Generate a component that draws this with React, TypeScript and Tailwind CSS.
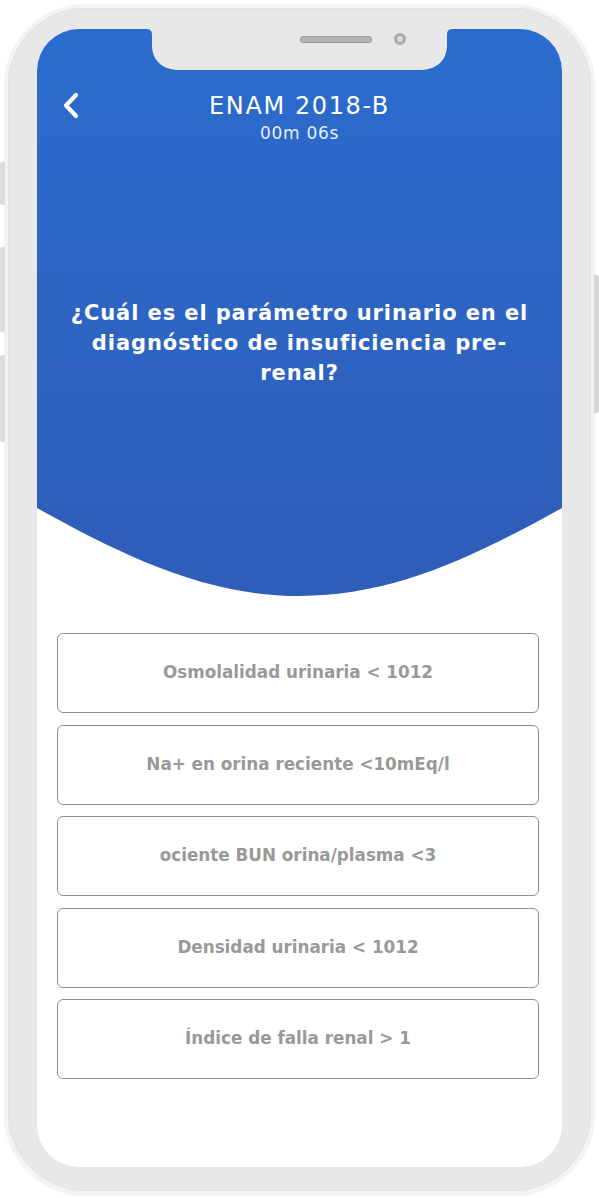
import React from "react";

const options = [
  "Osmolalidad urinaria < 1012",
  "Na+ en orina reciente <10mEq/l",
  "ociente BUN orina/plasma <3",
  "Densidad urinaria < 1012",
  "Índice de falla renal > 1",
];

function Notch() {
  return (
    <svg
      className="absolute left-[109px] top-0"
      width="307"
      height="42"
      viewBox="0 0 307 42"
    >
      <path
        d="M0 0 H307 C301 0 301 3 301 8 V16 C301 32 290 41 274 41 H33 C17 41 6 32 6 16 V8 C6 3 6 0 0 0 Z"
        fill="#e8e8e8"
      />
      <rect x="154" y="7" width="72" height="7" rx="3.5" fill="#9a9a9a" />
      <rect x="155" y="8" width="70" height="5" rx="2.5" fill="#b5b5b5" />
      <circle cx="254" cy="10" r="6.5" fill="#c4c4c4" />
      <circle cx="254" cy="10" r="5" fill="#9e9e9e" />
      <circle cx="254" cy="10" r="3.2" fill="#d9d9d9" />
    </svg>
  );
}

function SideButton({ h, right }: { h: string; right?: boolean }) {
  return (
    <div
      className={
        right
          ? "w-[5px] rounded-r-[2px] bg-[#d8d8d8] " + h
          : "w-[5px] rounded-l-[2px] bg-[#dcdcdc] " + h
      }
    />
  );
}

export default function App() {
  return (
    <div
      className="relative w-[599px] h-[1198px] bg-white overflow-hidden flex"
      style={{ fontFamily: '"DejaVu Sans", "Open Sans", sans-serif' }}
    >
      {/* left buttons */}
      <div className="absolute left-0 top-[162px] flex flex-col">
        <SideButton h="h-[43px]" />
        <div className="h-[42px]" />
        <SideButton h="h-[85px]" />
        <div className="h-[23px]" />
        <SideButton h="h-[87px]" />
      </div>
      <div className="absolute right-0 top-[275px]">
        <SideButton h="h-[138px]" right />
      </div>

      {/* phone body */}
      <div className="ml-[4px] mt-[4px] w-[591px] h-[1191px] rounded-[82px] bg-[#f3f3f3] p-[4px] shadow-[0_1px_2px_rgba(0,0,0,0.06)]">
        <div className="w-full h-full rounded-[78px] bg-[#e8e8e8] pt-[21px] pl-[29px] shadow-[inset_0_0_0_1px_#e2e2e2]">
          {/* screen */}
          <div className="relative w-[525px] h-[1138px] rounded-[42px] bg-white overflow-hidden">
            <div className="bg-gradient-to-b from-[#2a6cce] to-[#2f5fbb] h-[479px] flex flex-col items-center">
              <div className="w-full pt-[62px] grid grid-cols-[1fr_auto_1fr] items-start text-white">
                <div className="pl-[24px] pt-[1px]">
                  <svg width="20" height="28" viewBox="0 0 20 28" className="block">
                    <path
                      d="M15 3 L5 13.5 L15 24"
                      fill="none"
                      stroke="white"
                      strokeWidth="4.2"
                      strokeLinecap="round"
                      strokeLinejoin="round"
                    />
                  </svg>
                </div>
                <div className="flex flex-col items-center">
                  <div className="text-[24px] leading-[30px] font-normal tracking-[1.6px]">
                    ENAM 2018-B
                  </div>
                  <div className="text-[17px] leading-[20px] mt-[2px] tracking-[0.7px] text-[#e6eefb]">
                    00m 06s
                  </div>
                </div>
                <div />
              </div>
              <div className="mt-[155px] text-center text-white font-bold text-[21px] leading-[30px] tracking-[0.9px]">
                ¿Cuál es el parámetro urinario en el
                <br />
                diagnóstico de insuficiencia pre-
                <br />
                renal?
              </div>
            </div>
            <svg width="525" height="88" viewBox="0 0 525 88" className="block">
              <path
                d="M0 0 C90 50 170 88 262.5 88 C355 88 435 50 525 0 Z"
                fill="#2f5eba"
              />
            </svg>

            <Notch />

            <div className="mt-[37px] pl-[20px] pr-[23px] flex flex-col gap-[11.5px]">
              {options.map((o) => (
                <div
                  key={o}
                  className="h-[80px] rounded-[6px] border border-[#8f8f8f] flex items-center justify-center text-[#999999] font-bold text-[16.8px]"
                >
                  {o}
                </div>
              ))}
            </div>
          </div>
        </div>
      </div>
    </div>
  );
}
